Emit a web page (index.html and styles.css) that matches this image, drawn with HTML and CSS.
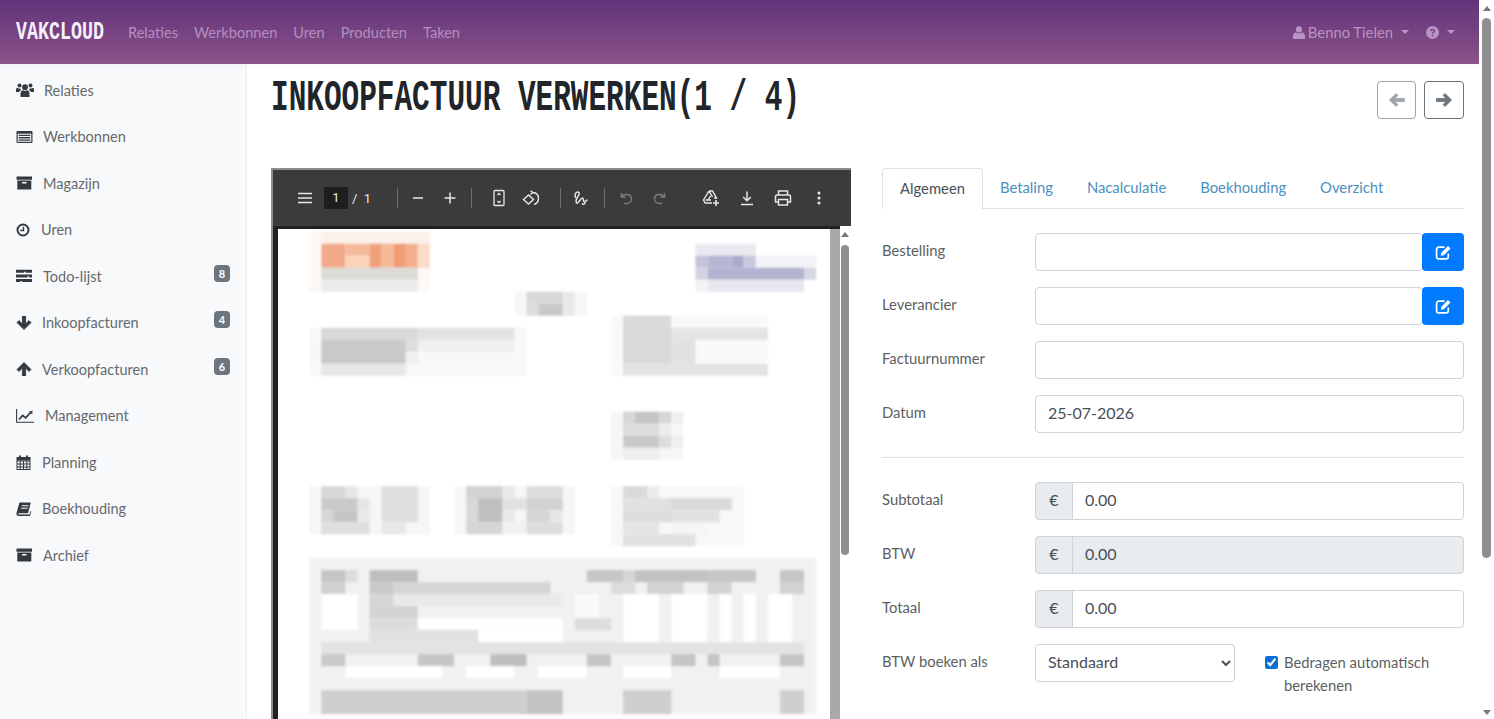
FILE: index.html
```html
<!DOCTYPE html>
<html lang="en">
<head>
  <meta charset="UTF-8">
  <meta name="viewport" content="width=device-width, initial-scale=1.0">
  <title>Vakcloud</title>
  <link rel="stylesheet" href="styles.css">
</head>
<body>
  <svg class="defs" width="0" height="0">
    <symbol id="i-archive" viewBox="0 0 16 14"><path d="M0 .5h15.5v3.2H0zM.8 4.6h14v9H.8zM5.6 6v1.5h4.4V6z" fill-rule="evenodd"/></symbol>
    <symbol id="i-edit" viewBox="0 0 16 16"><path d="M12.5 9v3a2 2 0 0 1-2 2H3.5a2 2 0 0 1-2-2V5a2 2 0 0 1 2-2h5.5" fill="none" stroke="currentColor" stroke-width="1.6"/><path d="M6 8.2l6.2-6.4 2.4 2.4-6.3 6.3-2.9.5z"/></symbol>
    <symbol id="i-arrow-up" viewBox="0 0 16 14"><path d="M8 .5l7 7-2 2-3.4-3.4V14H6.4V6.100L3 9.500l-2-2z" stroke="currentColor" stroke-width=".8"/></symbol>
    <symbol id="i-arrow-down" viewBox="0 0 16 14"><path d="M8 13.500l7-7-2-2-3.400 3.400V0H6.400v7.900L3 4.500l-2 2z" stroke="currentColor" stroke-width=".8"/></symbol>
    <symbol id="i-arrow-left" viewBox="0 0 16 14"><path d="M.5 7l6.500-6.500 1.900 1.900-3 3H15.500v3.200H5.900l3 3-1.900 1.900z" stroke="currentColor" stroke-width=".8"/></symbol>
    <symbol id="i-arrow-right" viewBox="0 0 16 14"><path d="M15.500 7L9 .5 7.100 2.400l3 3H.5v3.200h9.600l-3 3L9 13.500z" stroke="currentColor" stroke-width=".8"/></symbol>
  </svg>

  <div class="window">
    <div class="page">
      <!-- Top nav -->
      <header class="topbar">
        <a class="brand">VAKCLOUD</a>
        <nav class="topnav">
          <a>Relaties</a>
          <a>Werkbonnen</a>
          <a>Uren</a>
          <a>Producten</a>
          <a>Taken</a>
        </nav>
        <div class="topright">
          <a class="user-menu">
            <svg width="12" height="13" viewBox="0 0 12 13" fill="currentColor"><circle cx="6" cy="3.400" r="3.100"/><path d="M0 13v-3c0-2.500 1.500-3.600 3-3.600 1 .7 2 1 3 1s2-.3 3-1c1.500 0 3 1.100 3 3.600v3z"/></svg>
            Benno Tielen<span class="caret"></span>
          </a>
          <a class="help-menu">
            <svg width="13" height="13" viewBox="0 0 13 13"><circle cx="6.500" cy="6.500" r="6.500" fill="currentColor"/><path d="M4.600 5c.2-1 1-1.500 1.900-1.500 1.100 0 1.900.7 1.900 1.500 0 1.300-1.900 1.300-1.900 2.600" fill="none" stroke="#7a4682" stroke-width="1.500"/><rect x="5.700" y="8.800" width="1.600" height="1.500" fill="#7a4682"/></svg>
            <span class="caret"></span>
          </a>
        </div>
      </header>

      <div class="layout">
        <!-- Sidebar -->
        <aside class="sidebar">
          <a class="side-link">
            <svg width="18" height="14" viewBox="0 0 18 14" fill="currentColor"><circle cx="9" cy="4.200" r="2.900"/><circle cx="3.500" cy="2.500" r="2"/><circle cx="14.500" cy="2.500" r="2"/><path d="M4.500 14v-3.500C4.500 8.300 6 7.300 7 7.200c1.200.7 2.800.7 4 0 1 .1 2.500 1.100 2.500 3.300V14zM0 9V6.500C0 5.300.9 5 1.600 5c.9.6 2 .7 3 .4-.2 1-.1 1.400.3 2C3.700 7.700 3.300 8.300 3.100 9zM18 9V6.500c0-1.200-.9-1.500-1.600-1.500-.9.6-2 .7-3 .4.200 1 .1 1.400-.3 2 1.200.3 1.600.9 1.800 1.600z"/></svg>
            Relaties
          </a>
          <a class="side-link">
            <svg width="17" height="14" viewBox="0 0 17 14"><rect x="0.500" y="1" width="16" height="12" rx="1.200" fill="currentColor"/><rect x="1.700" y="3.700" width="13.600" height="8.100" fill="#f8f9fa"/><path d="M2.700 4.800h11.600v1.300H2.700zM2.700 7.100h11.600v1.300H2.700zM2.700 9.400h11.600v1.300H2.700z" fill="currentColor"/></svg>
            Werkbonnen
          </a>
          <a class="side-link">
            <svg width="17" height="14" fill="currentColor"><use href="#i-archive"/></svg>
            Magazijn
          </a>
          <a class="side-link">
            <svg width="15" height="14" viewBox="0 0 15 14"><circle cx="7" cy="7" r="5.500" fill="none" stroke="currentColor" stroke-width="2"/><path d="M7.500 3.800V7.500H4.300" fill="none" stroke="currentColor" stroke-width="1.400"/></svg>
            Uren
          </a>
          <a class="side-link">
            <svg width="17" height="14" viewBox="0 0 17 14" fill="currentColor"><path d="M0 .8h16v3H9.500V2.700H8v1.100H0zM0 5.400h16v3h-3V7.300h-1.500v1.100H0zM0 10h16v3H6v-1.100H4.500V13H0z"/></svg>
            Todo-lijst
            <span class="badge">8</span>
          </a>
          <a class="side-link">
            <svg width="16" height="14" fill="currentColor"><use href="#i-arrow-down"/></svg>
            Inkoopfacturen
            <span class="badge">4</span>
          </a>
          <a class="side-link">
            <svg width="16" height="14" fill="currentColor"><use href="#i-arrow-up"/></svg>
            Verkoopfacturen
            <span class="badge">6</span>
          </a>
          <a class="side-link">
            <svg width="19" height="14" viewBox="0 0 19 14"><path d="M.6 0v13.200H18" fill="none" stroke="currentColor" stroke-width="1.100"/><path d="M3 10.500l3.700-4 3 2.400 4.800-5.400" fill="none" stroke="currentColor" stroke-width="1.700"/><path d="M12.800 2.500l3.800-.7-.4 3.700z" fill="currentColor"/></svg>
            Management
          </a>
          <a class="side-link">
            <svg width="16" height="15" viewBox="0 0 16 15" fill="none" stroke="currentColor"><rect x="1" y="2.500" width="13" height="12"/><path d="M1 6h13M1 9h13M1 12h13M4.200 6v8.500M7.500 6v8.500M10.800 6v8.500"/><path d="M4 .5v3M11 .5v3" stroke-width="2"/><path d="M1 4.200h13" stroke-width="2.500"/></svg>
            Planning
          </a>
          <a class="side-link">
            <svg width="16" height="14" viewBox="0 0 16 14" fill="currentColor"><path d="M4.500.5h10.300l-.4 1.500L12 11.200H3C2 11.200 1.900 12.500 3 12.500h10.500l1-3.500.8.500-1.300 4.500H2.500C.8 14 .1 12.500.6 10.800L3 2C3.200 1 3.700.5 4.500.5zM6 3.200l-.3 1h6.500l.3-1zM5.300 5.700l-.3 1h6.500l.3-1z" fill-rule="evenodd"/></svg>
            Boekhouding
          </a>
          <a class="side-link">
            <svg width="17" height="14" fill="currentColor"><use href="#i-archive"/></svg>
            Archief
          </a>
        </aside>

        <main class="content">
          <div class="title-row">
            <h1 class="title">INKOOPFACTUUR VERWERKEN(1 / 4)</h1>
            <div class="pager">
              <a class="pager-btn is-disabled"><svg width="16" height="14" fill="currentColor"><use href="#i-arrow-left"/></svg></a>
              <a class="pager-btn"><svg width="16" height="14" fill="currentColor"><use href="#i-arrow-right"/></svg></a>
            </div>
          </div>

          <div class="columns">
            <!-- PDF viewer -->
            <section class="pdf">
              <div class="pdf-toolbar">
                <span class="tb-btn"><svg width="16" height="16" viewBox="0 0 16 16" fill="none" stroke="currentColor" stroke-width="1.400"><path d="M1 3.500h14M1 8h14M1 12.500h14"/></svg></span>
                <span class="tb-input">1</span>
                <span class="tb-count">/&nbsp;&nbsp;1</span>
                <span class="tb-sep"></span>
                <span class="tb-btn"><svg width="16" height="16" viewBox="0 0 16 16" fill="none" stroke="currentColor" stroke-width="1.500"><path d="M3 8h10"/></svg></span>
                <span class="tb-btn"><svg width="16" height="16" viewBox="0 0 16 16" fill="none" stroke="currentColor" stroke-width="1.500"><path d="M2.500 8h11M8 2.500v11"/></svg></span>
                <span class="tb-sep sep-b"></span>
                <span class="tb-btn"><svg width="16" height="18" viewBox="0 0 16 18" fill="none" stroke="currentColor" stroke-width="1.300"><rect x="3" y="1.500" width="10" height="15" rx="1"/><path d="M6.500 6L8 4.500 9.500 6M6.500 12L8 13.500 9.500 12"/></svg></span>
                <span class="tb-btn"><svg width="18" height="18" viewBox="0 0 18 18" fill="none" stroke="currentColor" stroke-width="1.400"><path d="M1.500 10.500L6.500 6l5 4.500-5 4.500z"/><path d="M8.500 1.800L11 3.500 8.500 5.500M11 3.500c3.500.3 5.500 2.800 5.500 6 0 3-2 5.200-4.500 6"/></svg></span>
                <span class="tb-sep sep-c"></span>
                <span class="tb-btn"><svg width="16" height="16" viewBox="0 0 16 16" fill="none" stroke="currentColor" stroke-width="1.400"><path d="M3 8C.5 5 3.500.5 6 2.500c2 2-5 7-2.500 10.500C5 14.500 7.500 8 9.500 8c1.500 0 0 3 1.500 3.500 1 .3 2-1 3.500-1.500M9 13.500c1 1.500 4 .5 3-2"/></svg></span>
                <span class="tb-sep sep-d"></span>
                <span class="tb-btn is-off"><svg width="16" height="16" viewBox="0 0 16 16" fill="none" stroke="currentColor" stroke-width="1.400"><path d="M2.500 3v4h4"/><path d="M2.800 7c1-2 2.500-2.500 4.700-2.500 3 0 5 1.800 5 4.500s-2 4.500-5 4.500H5"/></svg></span>
                <span class="tb-btn is-off"><svg width="16" height="16" viewBox="0 0 16 16" fill="none" stroke="currentColor" stroke-width="1.400"><path d="M13.500 3v4h-4"/><path d="M13.200 7c-1-2-2.500-2.500-4.700-2.500-3 0-5 1.800-5 4.500s2 4.500 5 4.500H11"/></svg></span>
                <span class="tb-btn wide first-wide"><svg width="18" height="18" viewBox="0 0 18 18" fill="none" stroke="currentColor" stroke-width="1.400"><path d="M7 2h3.500l4 7H12M7 2L1.500 11l1.700 3H10M7 2l3.500 6M3.500 11h5.500M6 11l2.500-4"/><path d="M14 11v6M11 14h6" stroke-width="1.600"/></svg></span>
                <span class="tb-btn wide"><svg width="16" height="16" viewBox="0 0 16 16" fill="none" stroke="currentColor" stroke-width="1.500"><path d="M8 1.500v9M4.200 7L8 10.800 11.800 7M2 14.500h12"/></svg></span>
                <span class="tb-btn wide"><svg width="18" height="16" viewBox="0 0 18 16" fill="none" stroke="currentColor" stroke-width="1.500"><path d="M4.500 5V1h9v4M4.500 12H1.500V6.500A1.500 1.500 0 0 1 3 5h12a1.500 1.500 0 0 1 1.500 1.500V12h-3"/><rect x="4.500" y="9.500" width="9" height="5.500"/></svg></span>
                <span class="tb-btn wide"><svg width="16" height="16" viewBox="0 0 16 16" fill="currentColor"><circle cx="8" cy="3" r="1.500"/><circle cx="8" cy="8" r="1.500"/><circle cx="8" cy="13" r="1.500"/></svg></span>
              </div>
              <div class="pdf-body">
                <div class="pdf-sheet">
                  <!-- blurred invoice, one unit is one mosaic cell -->
                  <svg class="pdf-mosaic" width="552" height="492" viewBox="0 0 552 492">
                    <defs><filter id="soft" x="-2%" y="-2%" width="104%" height="104%"><feGaussianBlur stdDeviation="1.300"/></filter></defs>
                    <g filter="url(#soft)"><g transform="matrix(12.07 0 0 12 -5 2.700)">
                      <rect x="3" y="0" width="10" height="5" fill="#fbf8f5"/>
                      <rect x="4" y="0" width="9" height="1" fill="#fbf1e8"/>
                      <rect x="4" y="1" width="2" height="2" fill="#f2aa8a"/><rect x="6" y="1" width="2" height="1" fill="#f5ba9c"/><rect x="6" y="2" width="2" height="1" fill="#fbd2ba"/>
                      <rect x="8" y="1" width="1" height="2" fill="#f0a179"/><rect x="9" y="1" width="1" height="2" fill="#f5b899"/><rect x="10" y="1" width="1" height="2" fill="#ef9d73"/><rect x="11" y="1" width="1" height="2" fill="#f3ae8c"/><rect x="12" y="1" width="1" height="2" fill="#fadcc8"/>
                      <rect x="4" y="3" width="8" height="1" fill="#dcdbd8"/><rect x="4" y="4" width="8" height="1" fill="#ebebeb"/>

                      <rect x="35" y="1" width="5" height="1" fill="#e9e9ef"/>
                      <rect x="35" y="2" width="1" height="1" fill="#c2c2da"/><rect x="36" y="2" width="2" height="1" fill="#b6b6d5"/><rect x="38" y="2" width="1" height="1" fill="#aaaacd"/><rect x="39" y="2" width="1" height="1" fill="#c8c8df"/><rect x="40" y="2" width="5" height="1" fill="#f3f3f7"/>
                      <rect x="35" y="3" width="1" height="1" fill="#d2d2e2"/><rect x="36" y="3" width="8" height="1" fill="#b4b4d2"/><rect x="44" y="3" width="1" height="1" fill="#d6d6e5"/>
                      <rect x="35" y="4" width="1" height="1" fill="#f2f2f6"/><rect x="36" y="4" width="8" height="1" fill="#e7e7ef"/>

                      <rect x="20" y="5" width="6" height="2" fill="#f7f7f7"/>
                      <rect x="21" y="5" width="3" height="1" fill="#d8d8d8"/><rect x="24" y="5" width="1" height="2" fill="#e9e9e9"/><rect x="21" y="6" width="1" height="1" fill="#dcdcdc"/><rect x="22" y="6" width="2" height="1" fill="#c9c9c9"/>

                      <rect x="3" y="8" width="18" height="4" fill="#f8f8f8"/>
                      <rect x="4" y="8" width="8" height="1" fill="#d9d9d9"/><rect x="12" y="8" width="8" height="1" fill="#e2e2e2"/>
                      <rect x="4" y="9" width="7" height="2" fill="#c9c9c9"/><rect x="11" y="9" width="1" height="1" fill="#dcdcdc"/><rect x="12" y="9" width="8" height="1" fill="#efefef"/><rect x="11" y="10" width="1" height="1" fill="#efefef"/>
                      <rect x="4" y="11" width="7" height="1" fill="#e7e7e7"/>

                      <rect x="28" y="7" width="13" height="5" fill="#f9f9f9"/>
                      <rect x="29" y="7" width="4" height="1" fill="#dadada"/><rect x="29" y="8" width="4" height="3" fill="#d9d9d9"/><rect x="33" y="8" width="8" height="1" fill="#e4e4e4"/><rect x="33" y="9" width="2" height="2" fill="#e2e2e2"/><rect x="29" y="11" width="12" height="1" fill="#e3e3e3"/>

                      <rect x="28" y="15" width="6" height="4" fill="#f6f6f6"/>
                      <rect x="29" y="15" width="1" height="1" fill="#d6d6d6"/><rect x="30" y="15" width="2" height="1" fill="#c5c5c5"/><rect x="32" y="15" width="1" height="1" fill="#d6d6d6"/><rect x="33" y="15" width="1" height="1" fill="#eeeeee"/>
                      <rect x="29" y="16" width="3" height="1" fill="#dddddd"/><rect x="32" y="16" width="1" height="1" fill="#ededed"/>
                      <rect x="29" y="17" width="3" height="1" fill="#c9c9c9"/><rect x="32" y="17" width="1" height="1" fill="#dddddd"/><rect x="33" y="17" width="1" height="1" fill="#efefef"/>
                      <rect x="29" y="18" width="3" height="1" fill="#ededed"/>

                      <g transform="translate(0 2.200)">
                      <rect x="3" y="19" width="10" height="4" fill="#f6f6f6"/>
                      <rect x="4" y="19" width="2" height="1" fill="#d8d8d8"/><rect x="6" y="19" width="1" height="1" fill="#e7e7e7"/>
                      <rect x="4" y="20" width="3" height="1" fill="#c9c9c9"/><rect x="7" y="20" width="1" height="1" fill="#e5e5e5"/>
                      <rect x="4" y="21" width="1" height="1" fill="#d6d6d6"/><rect x="5" y="21" width="2" height="1" fill="#c5c5c5"/><rect x="7" y="21" width="1" height="1" fill="#e7e7e7"/>
                      <rect x="4" y="22" width="4" height="1" fill="#dfdfdf"/>
                      <rect x="9" y="19" width="3" height="3" fill="#dedede"/><rect x="9" y="22" width="2" height="1" fill="#e7e7e7"/>

                      <rect x="15" y="19" width="10" height="4" fill="#f6f6f6"/>
                      <rect x="16" y="19" width="3" height="1" fill="#d2d2d2"/><rect x="19" y="19" width="1" height="1" fill="#e9e9e9"/><rect x="21" y="19" width="3" height="1" fill="#dddddd"/>
                      <rect x="16" y="20" width="1" height="2" fill="#d8d8d8"/><rect x="17" y="20" width="2" height="2" fill="#c0c0c0"/><rect x="19" y="20" width="2" height="1" fill="#e1e1e1"/><rect x="21" y="20" width="3" height="1" fill="#d2d2d2"/>
                      <rect x="19" y="21" width="1" height="1" fill="#e9e9e9"/><rect x="21" y="21" width="2" height="1" fill="#d6d6d6"/><rect x="23" y="21" width="1" height="1" fill="#e7e7e7"/>
                      <rect x="16" y="22" width="3" height="1" fill="#d6d6d6"/><rect x="19" y="22" width="2" height="1" fill="#f1f1f1"/><rect x="21" y="22" width="3" height="1" fill="#dddddd"/>

                      <rect x="28" y="19" width="11" height="5" fill="#f8f8f8"/>
                      <rect x="29" y="19" width="2" height="1" fill="#d9d9d9"/><rect x="31" y="19" width="1" height="1" fill="#ececec"/>
                      <rect x="29" y="20" width="4" height="1" fill="#e1e1e1"/><rect x="33" y="20" width="5" height="1" fill="#d9d9d9"/>
                      <rect x="29" y="21" width="4" height="1" fill="#dddddd"/><rect x="33" y="21" width="4" height="1" fill="#e1e1e1"/>
                      <rect x="29" y="22" width="3" height="1" fill="#e5e5e5"/><rect x="33" y="22" width="3" height="1" fill="#f5f5f5"/>
                      <rect x="29" y="23" width="6" height="1" fill="#e1e1e1"/>

                      <rect x="3" y="25" width="42" height="13" fill="#f1f1f1"/>
                      <rect x="4" y="26" width="2" height="1" fill="#c5c5c5"/><rect x="6" y="26" width="1" height="1" fill="#dddddd"/><rect x="8" y="26" width="4" height="1" fill="#bebebe"/>
                      <rect x="26" y="26" width="3" height="1" fill="#c6c6c6"/><rect x="29" y="26" width="1" height="1" fill="#d6d6d6"/><rect x="30" y="26" width="6" height="1" fill="#c2c2c2"/><rect x="36" y="26" width="4" height="1" fill="#c6c6c6"/><rect x="42" y="26" width="2" height="1" fill="#c6c6c6"/>
                      <rect x="4" y="27" width="2" height="1" fill="#d0d0d0"/><rect x="8" y="27" width="2" height="1" fill="#c9c9c9"/><rect x="10" y="27" width="13" height="1" fill="#d5d5d5"/>
                      <rect x="28" y="27" width="2" height="1" fill="#dcdcdc"/><rect x="31" y="27" width="3" height="1" fill="#d2d2d2"/><rect x="36" y="27" width="2" height="1" fill="#d2d2d2"/><rect x="42" y="27" width="2" height="1" fill="#d2d2d2"/>

                      <rect x="4" y="28" width="3" height="3" fill="#ffffff"/>
                      <rect x="8" y="28" width="2" height="1" fill="#d5d5d5"/><rect x="10" y="28" width="14" height="1" fill="#e9e9e9"/>
                      <rect x="8" y="29" width="4" height="1" fill="#d3d3d3"/><rect x="12" y="29" width="12" height="1" fill="#f2f2f2"/>
                      <rect x="8" y="30" width="4" height="1" fill="#dcdcdc"/><rect x="12" y="30" width="12" height="1" fill="#ffffff"/>
                      <rect x="8" y="31" width="9" height="1" fill="#e1e1e1"/><rect x="17" y="31" width="7" height="1" fill="#ffffff"/>
                      <rect x="25" y="28" width="2" height="2" fill="#fafafa"/><rect x="25" y="30" width="3" height="1" fill="#dddddd"/>
                      <rect x="29" y="28" width="3" height="4" fill="#ffffff"/><rect x="33" y="28" width="3" height="4" fill="#ffffff"/><rect x="37" y="28" width="1" height="4" fill="#ffffff"/><rect x="39" y="28" width="1" height="4" fill="#ffffff"/><rect x="41" y="28" width="2" height="4" fill="#ffffff"/>

                      <rect x="4" y="32" width="40" height="1" fill="#e3e3e3"/>
                      <rect x="4" y="33" width="2" height="1" fill="#c9c9c9"/><rect x="12" y="33" width="3" height="1" fill="#c5c5c5"/><rect x="18" y="33" width="3" height="1" fill="#bebebe"/><rect x="26" y="33" width="2" height="1" fill="#c5c5c5"/><rect x="33" y="33" width="2" height="1" fill="#c5c5c5"/><rect x="36" y="33" width="1" height="1" fill="#c5c5c5"/><rect x="42" y="33" width="2" height="1" fill="#c5c5c5"/>
                      <rect x="6" y="34" width="8" height="1" fill="#ffffff"/><rect x="16" y="34" width="4" height="1" fill="#ffffff"/><rect x="22" y="34" width="4" height="1" fill="#ffffff"/><rect x="29" y="34" width="4" height="1" fill="#ffffff"/><rect x="37" y="34" width="5" height="1" fill="#ffffff"/>
                      <rect x="4" y="36" width="17" height="2" fill="#cfcfcf"/><rect x="21" y="36" width="3" height="2" fill="#c3c3c3"/><rect x="29" y="36" width="4" height="2" fill="#cfcfcf"/><rect x="42" y="36" width="2" height="2" fill="#cfcfcf"/>
                      </g>
                    </g></g>
                  </svg>
                </div>
                <div class="pdf-band"></div>
                <div class="pdf-scroll"><span class="arrow-up"></span><span class="pdf-thumb"></span></div>
              </div>
            </section>

            <!-- Form -->
            <section class="panel">
              <ul class="tabs">
                <li class="tab is-active">Algemeen</li>
                <li class="tab">Betaling</li>
                <li class="tab">Nacalculatie</li>
                <li class="tab">Boekhouding</li>
                <li class="tab">Overzicht</li>
              </ul>

              <div class="form-row">
                <label>Bestelling</label>
                <div class="group">
                  <input class="field" type="text">
                  <button class="btn-edit"><svg width="17" height="17" fill="currentColor"><use href="#i-edit"/></svg></button>
                </div>
              </div>
              <div class="form-row">
                <label>Leverancier</label>
                <div class="group">
                  <input class="field" type="text">
                  <button class="btn-edit"><svg width="17" height="17" fill="currentColor"><use href="#i-edit"/></svg></button>
                </div>
              </div>
              <div class="form-row">
                <label>Factuurnummer</label>
                <div class="group"><input class="field" type="text"></div>
              </div>
              <div class="form-row">
                <label>Datum</label>
                <div class="group"><input class="field" type="text" value="25-07-2026"></div>
              </div>

              <hr class="divider">

              <div class="form-row">
                <label>Subtotaal</label>
                <div class="group"><span class="addon">€</span><input class="field has-addon" type="text" value="0.00"></div>
              </div>
              <div class="form-row">
                <label>BTW</label>
                <div class="group"><span class="addon">€</span><input class="field has-addon" type="text" value="0.00" disabled></div>
              </div>
              <div class="form-row">
                <label>Totaal</label>
                <div class="group"><span class="addon">€</span><input class="field has-addon" type="text" value="0.00"></div>
              </div>
              <div class="form-row">
                <label>BTW boeken als</label>
                <select class="select"><option>Standaard</option></select>
                <label class="check"><input type="checkbox" checked><span>Bedragen automatisch berekenen</span></label>
              </div>
            </section>
          </div>
        </main>
      </div>
    </div>

    <div class="scrollbar"><span class="arrow-up"></span><span class="thumb"></span><span class="arrow-down"></span></div>
  </div>
</body>
</html>
```

FILE: styles.css
```css
/* General */
* {
  box-sizing: border-box;
}
html, body {
  margin: 0;
  height: 719px;
  overflow: hidden;
}
body {
  font-family: "Lato", "Liberation Sans", sans-serif;
  font-size: 14.8px;
  color: #495057;
  background: #fff;
}
.defs {
  position: absolute;
}
.window {
  display: flex;
  height: 719px;
}
.page {
  flex: 1;
  min-width: 0;
  display: flex;
  flex-direction: column;
}

/* Top nav */
.topbar {
  height: 64px;
  flex: none;
  display: flex;
  align-items: center;
  padding: 0 24px 0 16px;
  background: linear-gradient(to bottom, #62337a, #8a5389);
  box-shadow: 0 2px 3px rgba(240, 200, 240, 0.2);
  position: relative;
}
.brand {
  width: 112px;
  font-family: "Liberation Mono", monospace;
  font-weight: bold;
  font-size: 26px;
  color: #f6eefa;
  white-space: nowrap;
  transform: scaleX(0.705);
  transform-origin: left center;
}
.topnav {
  display: flex;
  gap: 16px;
  font-size: 14.6px;
  color: #b38ec0;
}
.topright {
  margin-left: auto;
  display: flex;
  align-items: center;
  gap: 17px;
  color: #b893c3;
}
.user-menu, .help-menu {
  display: flex;
  align-items: center;
  gap: 3px;
}
.caret {
  width: 0;
  height: 0;
  margin-left: 5px;
  border-top: 4px solid currentColor;
  border-left: 4px solid transparent;
  border-right: 4px solid transparent;
}

/* Sidebar */
.layout {
  flex: 1;
  min-height: 0;
  display: flex;
}
.sidebar {
  width: 247px;
  flex: none;
  padding-top: 3px;
  font-size: 14.5px;
  background: #f8f9fa;
  border-right: 1px solid #ececec;
}
.side-link {
  display: flex;
  align-items: center;
  height: 46.5px;
  padding: 0 16px;
  color: #65696d;
}
.side-link svg {
  flex: none;
  margin-right: 10px;
  color: #343a40;
}
.badge {
  margin-left: auto;
  margin-bottom: 6px;
  width: 16px;
  height: 17px;
  border-radius: 4px;
  background: #6c757d;
  color: #fff;
  font-size: 11px;
  font-weight: bold;
  line-height: 17px;
  text-align: center;
}

/* Content */
.content {
  flex: 1;
  min-width: 0;
  padding: 0 15px 0 24px;
  overflow: hidden;
}
.title-row {
  height: 104px;
  padding-top: 17px;
  display: flex;
  justify-content: space-between;
  align-items: flex-start;
}
.title {
  margin: -5px 0 0;
  font-family: "Liberation Mono", monospace;
  font-weight: bold;
  font-size: 44px;
  line-height: 44px;
  color: #212529;
  white-space: nowrap;
  transform: scaleX(0.668);
  transform-origin: left center;
}
.pager {
  display: flex;
  gap: 8px;
}
.pager-btn {
  display: flex;
  align-items: center;
  justify-content: center;
  width: 40px;
  height: 38px;
  border: 1px solid #6c757d;
  border-radius: 4px;
  color: #6c757d;
}
.pager-btn.is-disabled {
  width: 39px;
  opacity: 0.65;
}
.columns {
  display: grid;
  grid-template-columns: 580px 582px;
  gap: 31px;
}

/* PDF viewer */
.pdf {
  height: 551px;
  border-top: 2px solid #8c8c8c;
  border-left: 2px solid #8c8c8c;
  background: #fff;
}
.pdf-toolbar {
  height: 56px;
  display: flex;
  align-items: center;
  padding-left: 16px;
  background: #3b3b3b;
  color: #e8e8e8;
}
.tb-btn {
  flex: none;
  display: flex;
  align-items: center;
  justify-content: center;
  width: 32px;
}
.tb-btn.is-off {
  color: #7d7d7d;
}
.tb-btn.wide {
  width: 36px;
}
.tb-btn.first-wide {
  margin-left: 18px;
}
.tb-input {
  width: 24px;
  height: 22px;
  margin-left: 3px;
  background: #1d1d1d;
  font-family: "Roboto", sans-serif;
  font-size: 13px;
  line-height: 22px;
  text-align: center;
}
.tb-count {
  width: 49px;
  padding-left: 4px;
  font-family: "Roboto", sans-serif;
  font-size: 13px;
}
.tb-sep {
  flex: none;
  width: 1px;
  height: 20px;
  margin: 0 4px 0 0;
  background: #6e6e6e;
}
.sep-b {
  margin: 0 11px 0 5px;
}
.sep-c {
  margin: 0 4px 0 13px;
}
.sep-d {
  margin: 0 6px 0 7px;
}
.pdf-body {
  height: 495px;
  display: flex;
}
.pdf-sheet {
  width: 557px;
  flex: none;
  border-top: 3px solid #202020;
  border-left: 5px solid #202020;
  background: #fff;
  overflow: hidden;
}
.pdf-mosaic {
  display: block;
}
.pdf-band {
  width: 10px;
  flex: none;
  border-top: 3px solid #202020;
  background: #a9a9a9;
}
.pdf-scroll {
  flex: 1;
  position: relative;
  background: #fff;
}
.pdf-scroll .arrow-up {
  position: absolute;
  top: 6px;
  left: 1px;
}
.pdf-thumb {
  position: absolute;
  top: 19px;
  left: 1px;
  width: 8px;
  height: 310px;
  border-radius: 4px;
  background: #8f8f8f;
}

/* Tabs and form */
.tabs {
  display: flex;
  margin: 0 0 24px;
  padding: 0;
  list-style: none;
  height: 41px;
  border-bottom: 1px solid #dee2e6;
}
.tab {
  padding: 10px 17px 0;
  color: #4a8fc0;
}
.tab.is-active {
  height: 41px;
  width: 101px;
  padding: 10px 0 0;
  text-align: center;
  color: #495057;
  background: #fff;
  border: 1px solid #dee2e6;
  border-bottom: none;
  border-radius: 4px 4px 0 0;
}
.form-row {
  display: flex;
  margin-bottom: 16px;
  align-items: flex-start;
}
.form-row > label:first-child {
  width: 153px;
  flex: none;
  padding-top: 8px;
  color: #5b5f63;
}
.group {
  flex: 1;
  display: flex;
}
.field {
  flex: 1;
  min-width: 0;
  height: 38px;
  padding: 0 12px 3px;
  border: 1px solid #ced4da;
  border-radius: 4px;
  background: #fff;
  color: #495057;
  font: inherit;
  font-size: 16px;
}
.field:disabled {
  background: #e9ecef;
}
.field.has-addon {
  border-radius: 0 4px 4px 0;
  margin-left: -1px;
}
.addon {
  width: 38px;
  height: 38px;
  flex: none;
  border: 1px solid #ced4da;
  border-radius: 4px 0 0 4px;
  background: #e9ecef;
  font-size: 16px;
  line-height: 33px;
  text-align: center;
}
.btn-edit {
  width: 42px;
  height: 38px;
  flex: none;
  margin-left: -1px;
  padding: 0;
  display: flex;
  align-items: center;
  justify-content: center;
  border: none;
  border-radius: 4px;
  background: #007bff;
  color: #fff;
}
.divider {
  margin: 24px 0 24px;
  border: none;
  border-top: 1px solid #dee2e6;
}
.select {
  width: 200px;
  height: 38px;
  flex: none;
  padding: 0 8px 3px;
  border: 1px solid #ced4da;
  border-radius: 4px;
  background: #fff;
  color: #495057;
  font: inherit;
  font-size: 16px;
}
.check {
  display: flex;
  gap: 6px;
  margin-left: 30px;
  padding-top: 7px;
  line-height: 23px;
  color: #5b5f63;
}
.check input {
  width: 13px;
  height: 13px;
  flex: none;
  margin: 5px 0 0;
  accent-color: #0b6fd6;
}

/* Page scrollbar */
.scrollbar {
  width: 15px;
  flex: none;
  display: flex;
  flex-direction: column;
  align-items: center;
  background: #fff;
}
.thumb {
  width: 9px;
  height: 540px;
  border-radius: 5px;
  background: #8f8f8f;
}
.arrow-up, .arrow-down {
  width: 0;
  height: 0;
  border-left: 4px solid transparent;
  border-right: 4px solid transparent;
}
.arrow-up {
  border-bottom: 5px solid #777;
}
.scrollbar .arrow-up {
  margin: 6px 0 7px;
}
.arrow-down {
  margin-top: auto;
  margin-bottom: 4px;
  border-top: 5px solid #777;
}
```
